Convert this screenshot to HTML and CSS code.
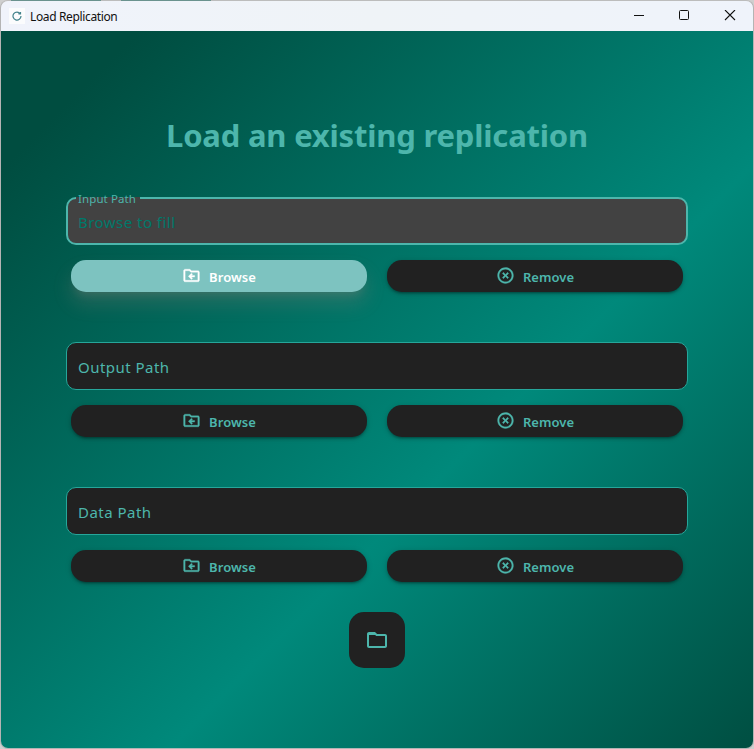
FILE: index.html
```html
<!DOCTYPE html>
<html lang="en">
<head>
<meta charset="utf-8">
<title>Load Replication</title>
<link rel="stylesheet" href="styles.css">
</head>
<body>
<svg width="0" height="0" class="defs">
  <symbol id="move" viewBox="0 0 24 24"><path d="M20 6h-8l-2-2H4c-1.1 0-2 .9-2 2v12c0 1.1.9 2 2 2h16c1.1 0 2-.9 2-2V8c0-1.100-.9-2-2-2zm0 12H4V6h5.170l2 2H20v10zM12 17l1.410-1.410L11.830 14H16v-2h-4.170l1.580-1.590L12 9l-4 4 4 4z"/></symbol>
  <symbol id="remove" viewBox="0 0 24 24"><path d="M14.590 8L12 10.590 9.410 8 8 9.410 10.590 12 8 14.590 9.410 16 12 13.410 14.590 16 16 14.590 13.410 12 16 9.410 14.590 8zM12 2C6.470 2 2 6.470 2 12s4.470 10 10 10 10-4.470 10-10S17.530 2 12 2zm0 18c-4.410 0-8-3.590-8-8s3.590-8 8-8 8 3.590 8 8-3.590 8-8 8z"/></symbol>
  <symbol id="folder" viewBox="0 0 24 24"><path d="M9.170 6l2 2H20v10H4V6h5.170M10 4H4c-1.100 0-1.990.9-1.990 2L2 18c0 1.100.9 2 2 2h16c1.100 0 2-.9 2-2V8c0-1.100-.9-2-2-2h-8l-2-2z"/><path d="M3 5h7.500l2 2H3z"/></symbol>
</svg>
<div class="window">
  <header class="titlebar">
    <span class="app-icon"><svg width="10" height="10" viewBox="0 0 10 10"><path d="M8.300 2.800A4 4 0 1 0 9 5M6.400 2.900H8.500V.9" fill="none" stroke="#43838c" stroke-width="1.200"/></svg></span>
    <span class="app-name">Load Replication</span>
    <svg class="controls" width="104" height="12" viewBox="0 0 104 12" fill="none" stroke="#111"><path d="M0 5.500h10"/><rect x="45.500" y=".5" width="9" height="9" rx="1"/><path d="M91 0l10 10M101 0L91 10" stroke-width="1.100"/></svg>
  </header>
  <main class="content">
    <h1>Load an existing replication</h1>
    <section class="group">
      <div class="field focused"><span class="label">Input Path</span><span class="text hint">Browse to fill</span></div>
      <div class="buttons">
        <button class="btn hovered"><svg><use href="#move"/></svg><span class="browse">Browse</span></button>
        <button class="btn"><svg><use href="#remove"/></svg><span class="remove">Remove</span></button>
      </div>
    </section>
    <section class="group">
      <div class="field"><span class="text output">Output Path</span></div>
      <div class="buttons">
        <button class="btn"><svg><use href="#move"/></svg><span class="browse">Browse</span></button>
        <button class="btn"><svg><use href="#remove"/></svg><span class="remove">Remove</span></button>
      </div>
    </section>
    <section class="group">
      <div class="field"><span class="text data">Data Path</span></div>
      <div class="buttons">
        <button class="btn"><svg><use href="#move"/></svg><span class="browse">Browse</span></button>
        <button class="btn"><svg><use href="#remove"/></svg><span class="remove">Remove</span></button>
      </div>
    </section>
    <button class="fab" aria-label="Open folder"><svg><use href="#folder"/></svg></button>
  </main>
</div>
</body>
</html>
```
FILE: styles.css
```css
* { box-sizing: border-box; }
body {
  margin: 0;
  height: 749px;
  overflow: hidden;
  background: linear-gradient(90deg, transparent 11px, #2b7a73 11px 101px, transparent 101px 121px, #2b7a73 121px 211px, transparent 211px) 0 0 / 100% 1px no-repeat, #cfcfcf;
  font-family: "Noto Sans", "Open Sans", sans-serif;
}
.defs { position: absolute; }
.window {
  height: 749px;
  border: 1px solid #b4b4b4;
  border-top-color: rgba(170, 170, 170, .5);
  border-radius: 8px;
  overflow: hidden;
  display: flex;
  flex-direction: column;
}
.titlebar {
  flex: 0 0 30px;
  display: flex;
  align-items: center;
  background: linear-gradient(90deg, #f0f3fb, #eff3f7 50%, #eff3fb);
  padding: 0 15px 0 8px;
  color: #111;
}
.app-icon {
  width: 16px;
  height: 16px;
  background: #fbfcfd;
  display: grid;
  place-items: center;
  margin-right: 5px;
}
.app-name { font-size: 12px; letter-spacing: -.36px; }
.controls { margin-left: auto; }
.content {
  flex: 1;
  display: flex;
  flex-direction: column;
  align-items: center;
  background: linear-gradient(135deg, #004d40 9.400%, #00897b 60.300%, #004d40 101%);
}
h1 {
  margin: 82px 0 40px;
  font-size: 31px;
  line-height: 44px;
  font-weight: 700;
  color: #4db6ac;
  letter-spacing: -.2px;
  white-space: nowrap;
}
.group { width: 622px; margin-bottom: 50px; }
.field {
  position: relative;
  height: 48px;
  border: 1px solid #26a69a;
  border-radius: 10px;
  background: #212121;
  padding: 1px 11px 0;
  display: flex;
  align-items: center;
}
.focused {
  border: 2px solid #4db6ac;
  background: #424242;
  padding: 1px 10px 0;
}
.text {
  font-size: 15px;
  letter-spacing: .47px;
  color: #4db6ac;
  white-space: nowrap;
}
.hint { color: #00796b; }
.label {
  position: absolute;
  left: 8px;
  top: -8px;
  width: 64px;
  height: 16px;
  padding-left: 2px;
  font-size: 11.500px;
  letter-spacing: .1px;
  line-height: 15px;
  color: #4db6ac;
  white-space: nowrap;
  background: linear-gradient(transparent 6px, #424242 6px);
}
.buttons {
  margin: 15px 5px 0;
  display: grid;
  grid-template-columns: 1fr 1fr;
  gap: 20px;
}
.btn {
  height: 32px;
  padding: 0;
  border: 0;
  border-radius: 15px;
  background: #212121;
  color: #4db6ac;
  font: 600 13px "Noto Sans", "Open Sans", sans-serif;
  letter-spacing: .05px;
  display: flex;
  align-items: center;
  justify-content: center;
  gap: 8px;
  box-shadow: 0 3px 2px -2px rgba(0, 0, 0, .2), 0 2px 3px rgba(0, 0, 0, .18), 0 1px 6px rgba(0, 0, 0, .14);
}
.btn svg {
  width: 19px;
  height: 19px;
  margin-bottom: 1px;
  fill: currentColor;
  stroke: currentColor;
  stroke-width: .4px;
}
.btn span { padding-top: 2px; }
.hovered {
  background: #7dc3c0;
  color: #fff;
  box-shadow: 0 12px 17px 2px rgba(150, 130, 125, .2), 0 7px 8px -4px rgba(150, 130, 125, .25);
}
.fab {
  margin-top: -20px;
  width: 56px;
  height: 56px;
  padding: 0;
  border: 0;
  border-radius: 15px;
  background: #212121;
  color: #4db6ac;
  display: grid;
  place-items: center;
}
.fab svg { width: 24px; height: 24px; fill: currentColor; }
```
